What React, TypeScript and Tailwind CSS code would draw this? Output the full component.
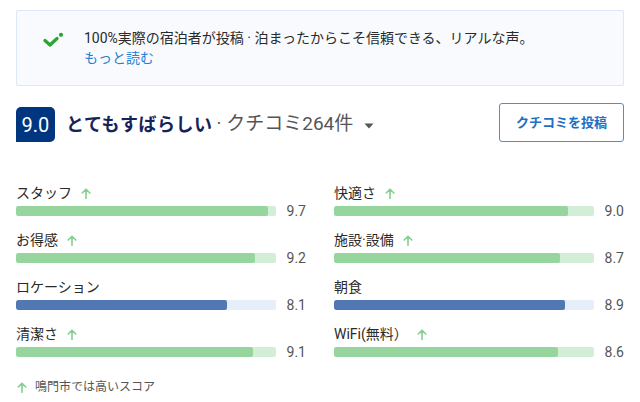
import React from "react";

const FONT = 'Roboto, "Noto Sans CJK JP", sans-serif';

type Item = { label: string; score: number; up: boolean };

const left: Item[] = [
  { label: "スタッフ", score: 9.7, up: true },
  { label: "お得感", score: 9.2, up: true },
  { label: "ロケーション", score: 8.1, up: false },
  { label: "清潔さ", score: 9.1, up: true },
];
const right: Item[] = [
  { label: "快適さ", score: 9.0, up: true },
  { label: "施設·設備", score: 8.7, up: true },
  { label: "朝食", score: 8.9, up: false },
  { label: "WiFi(無料）", score: 8.6, up: true },
];

function UpArrow({ className = "" }: { className?: string }) {
  return (
    <svg width="10" height="11" viewBox="0 0 10 11" className={className}>
      <path d="M5 10.5 V1.5 M1.2 5 L5 1.2 L8.8 5" fill="none" stroke="#82d18f" strokeWidth="1.6" strokeLinecap="round" strokeLinejoin="round" />
    </svg>
  );
}

function Row({ item }: { item: Item }) {
  const fill = item.up ? "bg-[#97d59f]" : "bg-[#5079b3]";
  const track = item.up ? "bg-[#d3eed6]" : "bg-[#e6eef9]";
  return (
    <div className="flex flex-col">
      <div className="flex items-center h-5 text-[14px] text-[#2a2a2a]">
        <span>{item.label}</span>
        {item.up && <UpArrow className="ml-[9px]" />}
      </div>
      <div className="flex items-center mt-[3px] h-[10px]">
        <div className={`flex-1 h-[10px] rounded-[2px] ${track} overflow-hidden`}>
          <div className={`h-full rounded-[2px] ${fill}`} style={{ width: `${item.score * 10}%` }} />
        </div>
        <div className="w-[30px] text-right text-[14px] text-[#555] leading-none">{item.score.toFixed(1)}</div>
      </div>
    </div>
  );
}

export default function App() {
  return (
    <div className="w-[640px] h-[402px] bg-white px-4 pt-[10px] overflow-hidden" style={{ fontFamily: FONT }}>
      <div className="flex border border-[#dbe8f8] bg-[#f8fafe] rounded-[2px] h-[76px] pt-[17px] pl-[26px]">
        <svg width="21" height="16" viewBox="0 0 21 16" className="mt-[4px] shrink-0">
          <path d="M2 8.5 L7 13 L14 6.5" fill="none" stroke="#2aa52f" strokeWidth="3.2" strokeLinecap="round" strokeLinejoin="round" />
          <circle cx="18" cy="2.8" r="2.1" fill="#2aa52f" />
        </svg>
        <div className="ml-[20px] text-[14px] leading-5 text-[#2a2a2a]">
          <div>100%実際の宿泊者が投稿 · 泊まったからこそ信頼できる、リアルな声。</div>
          <div className="text-[#2580d5]">もっと読む</div>
        </div>
      </div>

      <div className="flex items-center justify-between mt-[17px] h-[39px]">
        <div className="flex items-center pt-[4px]">
          <div className="w-[39px] h-[35px] bg-[#003580] rounded-[5px] rounded-bl-none flex items-center justify-center text-white text-[20px] leading-none">
            9.0
          </div>
          <span className="ml-[11px] text-[18px] font-bold tracking-[0.5px] text-[#15235a]">とてもすばらしい</span>
          <span className="ml-[4px] text-[19px] text-[#555]">·&nbsp;クチコミ264件</span>
          <svg width="10" height="6" viewBox="0 0 10 6" className="ml-[11px] mt-[3px]">
            <path d="M0.5 0.5 H9.5 L5 5.5 Z" fill="#555" />
          </svg>
        </div>
        <div className="w-[125px] h-[39px] border-[1.5px] border-[#4a90d9] rounded-[3px] flex items-center justify-center text-[13px] font-bold text-[#1d6fc4]">
          クチコミを投稿
        </div>
      </div>

      <div className="grid grid-cols-2 gap-x-[28px] gap-y-[14px] mt-[41px]">
        {left.map((l, i) => (
          <React.Fragment key={i}>
            <Row item={l} />
            <Row item={right[i]} />
          </React.Fragment>
        ))}
      </div>

      <div className="flex items-center mt-[21px] h-[18px] text-[12px] text-[#555]">
        <UpArrow className="ml-[1px]" />
        <span className="ml-[8px]">鳴門市では高いスコア</span>
      </div>
    </div>
  );
}
